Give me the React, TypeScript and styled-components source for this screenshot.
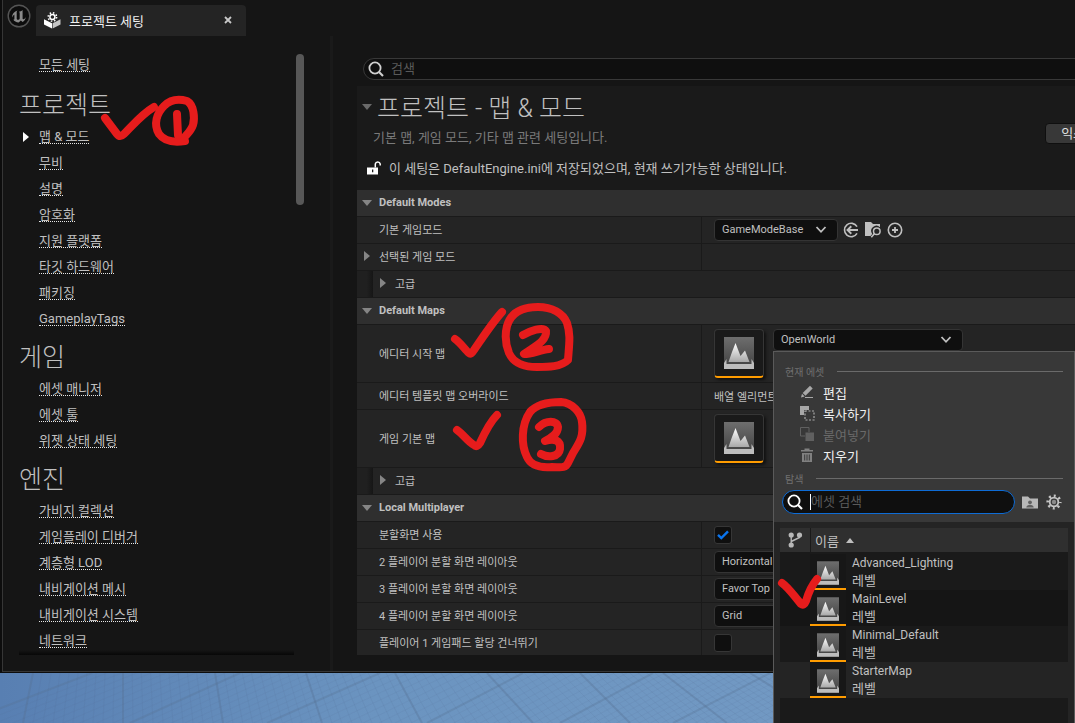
import React from 'react';
import styled, { createGlobalStyle, css } from 'styled-components';

const Global = createGlobalStyle`
  *, *::before, *::after { box-sizing: border-box; }
  html, body, #root { min-height: 100vh; }
  body {
    margin: 0;
    background: #151515;
    color: #c0c0c0;
    font-family: Roboto, "Noto Sans CJK KR", sans-serif;
    font-size: 13px;
    overflow: hidden;
  }
  h1, h2, ul, p { margin: 0; padding: 0; font-weight: 400; }
  ul { list-style: none; }
  button, input, select { font: inherit; color: inherit; margin: 0; }
  button { border: 0; background: none; padding: 0; cursor: pointer; }
  svg { display: block; flex: none; }
`;

/* ---------- Page and window ---------- */

const Page = styled.div`
  position: relative;
  min-height: 100vh;
  display: flex;
  flex-direction: column;
  overflow: hidden;
`;

const Window = styled.div`
  background: #151515;
  border-left: 2px solid #0d0d0d;
  border-bottom: 1px solid #0d0d0d;
`;

const WindowFrame = styled.div`
  border-left: 1px solid #363636;
  border-bottom: 1px solid #363636;
`;

const TitleBar = styled.header`
  display: flex;
  align-items: flex-end;
  gap: 5px;
  height: 36px;
  padding-left: 4px;
`;

const LogoBox = styled.div`
  align-self: flex-start;
  padding-top: 4px;
`;

const Tab = styled.div`
  display: flex;
  align-items: center;
  gap: 8px;
  width: 210px;
  height: 31px;
  padding: 0 14px 1px 8px;
  border-radius: 4px 4px 0 0;
  background: #242424;
  color: #f0f0f0;
`;

const TabTitle = styled.span`
  flex: 1;
`;

const Columns = styled.div`
  display: flex;
`;

/* ---------- Sidebar ---------- */

const Sidebar = styled.nav`
  display: flex;
  flex: none;
  width: 330px;
  padding: 16px 26px 16px 16px;
  border-right: 3px solid #1a1a1a;
`;

const SidebarList = styled.div`
  position: relative;
  flex: 1;
  height: 603px;
  overflow: hidden;
  &::after {
    content: '';
    position: absolute;
    left: 0;
    right: 0;
    bottom: 0;
    height: 5px;
    background: linear-gradient(to bottom, transparent, #070707);
  }
`;

const ScrollBar = styled.div`
  width: 8px;
  height: 151px;
  margin: 2px 0 0 2px;
  border-radius: 4px;
  background: #575757;
`;

const NavHeading = styled.h2`
  height: 44px;
  padding-top: 8px;
  line-height: 36px;
  font-size: 25px;
  font-weight: 300;
`;

const NavItem = styled.li`
  display: flex;
  align-items: flex-start;
  height: 26px;
  padding: 5px 0 0 4px;
`;

const NavArrow = styled.span`
  width: 16px;
  padding-top: 3px;
`;

const NavLink = styled.a`
  height: 15px;
  line-height: 16px;
  border-bottom: 1px dotted #e6e6e6;
  color: inherit;
  text-decoration: none;
`;

const AllSettings = styled.ul`
  margin-bottom: 2px;
`;

/* ---------- Main ---------- */

const Main = styled.main`
  flex: 1;
  min-width: 0;
  padding: 22px 0 16px 24px;
  overflow: hidden;
`;

const Wide = styled.div`
  margin-right: -60px;
`;

const SearchField = styled.label<{ $active?: boolean }>`
  display: flex;
  align-items: center;
  gap: 7px;
  flex: 1;
  height: ${p => (p.$active ? 24 : 22)}px;
  padding-left: 4px;
  border: 1px solid ${p => (p.$active ? '#0e6cd6' : '#383838')};
  border-radius: 12px;
  background: #0f0f0f;
  ${p => !p.$active && css`margin: 0 0 6px 6px;`}
`;

const SearchInput = styled.input`
  flex: 1;
  min-width: 0;
  height: 18px;
  padding: 0 0 1px;
  border: 0;
  outline: 0;
  background: transparent;
  &::placeholder { color: #5a5a5a; opacity: 1; }
`;

const Caret = styled.span`
  width: 1px;
  height: 16px;
  margin-right: -7px;
  background: #fff;
`;

const Intro = styled.section`
  padding: 6px 0;
  background: #1a1a1a;
`;

const TitleRow = styled.div`
  display: flex;
  align-items: center;
  height: 30px;
  padding-left: 5px;
  gap: 5px;
`;

const Title = styled.h1`
  padding-top: 3px;
  font-size: 25px;
  line-height: 30px;
  font-weight: 300;
`;

const DescRow = styled.div`
  display: flex;
  justify-content: space-between;
  height: 30px;
  padding: 1px 10px 0 16px;
  line-height: 30px;
  color: #7a7a7a;
`;

const ExportButton = styled.button`
  height: 21px;
  padding: 0 15px;
  line-height: 19px;
  border: 1px solid #0f0f0f;
  border-radius: 4px;
  background: #383838;
  color: #e0e0e0;
`;

const LockRow = styled.div`
  display: flex;
  align-items: center;
  gap: 8px;
  height: 32px;
  padding: 0 0 2px 10px;
`;

const GroupHeader = styled.h2`
  border-bottom: 1px solid #1a1a1a;
  background: #2f2f2f;
`;

const GroupToggle = styled.button`
  display: flex;
  align-items: center;
  width: 100%;
  height: 26px;
  gap: 7px;
  padding: 0 0 1px 5px;
  font-size: 11px;
  font-weight: 700;
`;

const Row = styled.div<{ $tall?: boolean }>`
  display: grid;
  grid-template-columns: 344px 1fr;
  height: ${p => (p.$tall ? 58 : 27)}px;
  border-bottom: 1px solid #1a1a1a;
  background: #242424;
  font-size: 11px;
  &:last-child { height: 25px; border-bottom: 0; }
`;

const NameCell = styled.div`
  display: flex;
  align-items: center;
  padding: 0 0 2px 7px;
`;

const ExpandSlot = styled.span`
  width: 15px;
`;

const ValueCell = styled.div`
  display: flex;
  align-items: center;
  gap: 4px;
  padding-left: 12px;
  border-left: 1px solid #1a1a1a;
  white-space: nowrap;
`;

const AssetCell = styled(ValueCell)`
  align-items: flex-start;
  padding-top: 4px;
  gap: 9px;
`;

const AdvancedRow = styled.div`
  display: flex;
  align-items: stretch;
  height: 27px;
  border-bottom: 1px solid #1a1a1a;
  background: #242424;
  font-size: 11px;
`;

const IndentStrip = styled.span`
  width: 16px;
  background: linear-gradient(to right, #202020 60%, #161616);
`;

const AdvancedToggle = styled.button`
  display: flex;
  align-items: center;
  gap: 9px;
  padding: 0 0 2px 7px;
`;

const SelectBox = styled.span<{ $w: number }>`
  display: grid;
  align-items: center;
  width: ${p => p.$w}px;
  height: 22px;
  & > * { grid-area: 1 / 1; }
  & > svg { justify-self: end; margin-right: 11px; pointer-events: none; }
`;

const Select = styled.select`
  appearance: none;
  width: 100%;
  height: 22px;
  padding: 0 0 1px 7px;
  border: 1px solid #343434;
  border-radius: 4px;
  background: #0f0f0f;
  font-size: 11px;
`;

const IconButton = styled.button`
  display: grid;
  place-items: center;
  width: 18px;
  height: 18px;
  color: #c0c0c0;
`;

const CheckWrap = styled.span`
  display: grid;
  place-items: center;
  width: 18px;
  height: 18px;
  & > * { grid-area: 1 / 1; }
  & > svg { pointer-events: none; }
`;

const CheckInput = styled.input`
  appearance: none;
  width: 18px;
  height: 18px;
  border: 1px solid #363636;
  border-radius: 3px;
  background: #0f0f0f;
`;

const Thumb = styled.span`
  display: grid;
  place-items: center;
  width: 50px;
  height: 49px;
  border: 1px solid #363636;
  border-bottom: 2px solid #ff9c00;
  border-radius: 4px;
  background: #1a1a1a;
  box-shadow: 2px 2px 3px #111;
`;

/* ---------- Asset picker popup ---------- */

const Popup = styled.aside`
  position: absolute;
  left: 773px;
  top: 351px;
  bottom: 0;
  width: 302px;
  display: flex;
  flex-direction: column;
  border: 1px solid #5a5a5a;
  border-bottom: 0;
  background: #242424;
`;

const PopupTop = styled.div`
  padding: 8px;
  background: #383838;
`;

const MenuHeading = styled.h2`
  display: flex;
  align-items: center;
  gap: 13px;
  height: 22px;
  padding: 0 3px 0 3px;
  font-size: 10px;
  color: #707070;
  &::after { content: ''; flex: 1; height: 1px; background: #6a6a6a; }
`;

const MenuList = styled.ul`
  padding-bottom: 1px;
`;

const MenuItem = styled.button`
  display: flex;
  align-items: center;
  width: 100%;
  height: 21px;
  padding: 0 0 1px 18px;
  color: #f0f0f0;
  &:disabled { color: #6a6a6a; }
`;

const MenuIcon = styled.span`
  width: 23px;
`;

const PickerBar = styled.div`
  display: flex;
  align-items: center;
  gap: 6px;
  padding: 1px 3px 0 0;
`;

const AssetPanel = styled.div`
  flex: 1;
  margin: 6px 6px 0;
  background: #1a1a1a;
`;

const AssetTable = styled.table`
  width: 100%;
  border-spacing: 0;
  th, td { padding: 0; text-align: left; font-weight: 400; }
  th { height: 26px; background: #2f2f2f; border-bottom: 2px solid #1a1a1a; }
  th:first-child { width: 31px; border-right: 1px solid #1a1a1a; }
`;

const Centered = styled.span`
  display: grid;
  place-items: center;
`;

const SortLabel = styled.button`
  display: flex;
  align-items: center;
  gap: 7px;
  padding-left: 4px;
`;

const AssetRow = styled.tr<{ $bg: string }>`
  height: 36px;
  background: ${p => p.$bg};
`;

const AssetName = styled.div`
  display: flex;
  gap: 6px;
  margin-left: -1px;
`;

const AssetText = styled.div`
  line-height: 17px;
  padding-top: 1px;
`;

const AssetTitle = styled.div`
  font-size: 12px;
`;

const SmallThumb = styled.span`
  display: grid;
  place-items: center;
  width: 36px;
  height: 36px;
  padding-top: 4px;
  border-bottom: 2px solid #ff9c00;
  background: #171717;
`;

/* ---------- Level viewport behind the window ---------- */

const Viewport = styled.div`
  flex: 1;
  min-height: 50px;
  overflow: hidden;
  background: linear-gradient(to right, #587fb2, #6b94c0 35%, #7299c3 75%);
`;

/* ---------- Hand-drawn marks ---------- */

const MarkSvg = styled.svg<{ $x: number; $y: number }>`
  position: absolute;
  left: ${p => p.$x}px;
  top: ${p => p.$y}px;
  pointer-events: none;
  fill: none;
  stroke: #e61c1c;
  stroke-width: 8;
  stroke-linecap: round;
  stroke-linejoin: round;
`;

/* ---------- Icons ---------- */

const Down = ({ c = '#7a7a7a' }: { c?: string }) => (
  <svg width="10" height="6"><path d="M0 0H10L5 6Z" fill={c} /></svg>
);
const Right = ({ c = '#858585' }: { c?: string }) => (
  <svg width="6" height="10"><path d="M0 0L6 5L0 10Z" fill={c} /></svg>
);
const Chevron = () => (
  <svg width="12" height="8" fill="none" stroke="#c0c0c0" strokeWidth="1.8"><path d="M1.5 1L6 5.8L10.500 1" /></svg>
);
const Search = ({ c = '#d0d0d0' }: { c?: string }) => (
  <svg width="16" height="16" fill="none" stroke={c} strokeWidth="1.8">
    <circle cx="7" cy="7" r="5.600" /><path d="M11 11L15 15" strokeWidth="2.200" />
  </svg>
);
const Logo = () => (
  <svg width="24" height="24" viewBox="0 0 24 24">
    <circle cx="12" cy="12" r="10.800" fill="#0c0c0c" stroke="#555" strokeWidth="1.400" />
    <path
      d="M5 13.500C5 10 7.400 7.300 10.600 6.400C9.800 7.100 9.700 7.700 9.700 8.500V14.600C9.700 15.700 10.600 16.100 11.600 15.700C12.300 15.400 12.700 15 12.700 14.500V9C12.700 8.300 12.300 8 11.700 7.900C13 7.400 14.500 6.900 15.700 5.900C15.500 6.800 15.600 7.600 15.600 8.400V14.500C15.600 15.300 16.300 15.600 17.100 15.100C17.900 14.600 18.600 13.800 19 13C18.500 15.300 17.400 16.900 15.700 17.900L13.800 16.400L11.700 18.500C9.300 18.400 7.200 17.300 6.200 15.600C7 15.900 7.400 15.600 7.400 14.700V10.400C6.200 11.200 5.500 12.200 5 13.500Z"
      fill="#8a8a8a"
    />
  </svg>
);
const SettingsBox = () => (
  <svg width="17" height="17" viewBox="0 0 17 17">
    <path d="M0 7.200L8 11.200V16.600L0 12.600Z" fill="#fff" />
    <path d="M16.500 7.200L8.600 11.200V16.600L16.500 12.600Z" fill="#c4c4c4" />
    <circle cx="8.400" cy="5" r="2.500" fill="none" stroke="#fff" strokeWidth="1.500" />
    <circle cx="8.400" cy="5" r="4.200" fill="none" stroke="#fff" strokeWidth="1.600" strokeDasharray="1.500 1.800" />
  </svg>
);
const Close = () => (
  <svg width="8" height="8" stroke="#c8c8c8" strokeWidth="1.800"><path d="M1 1L7 7M7 1L1 7" /></svg>
);
const Unlock = () => (
  <svg width="14" height="15" viewBox="0 0 14 15">
    <path d="M0 7.500H11V14.500H0Z" fill="#fff" />
    <path d="M8.300 7.500V4A2.500 2.500 0 0 1 13.200 4V5.500" fill="none" stroke="#fff" strokeWidth="1.500" />
    <path d="M5 9.600H6.300V12.200H5Z" fill="#1a1a1a" />
  </svg>
);
const UseSelected = () => (
  <svg width="16" height="16" fill="none" stroke="currentColor" strokeWidth="1.600">
    <path d="M14 4.600A6.700 6.700 0 1 0 14 11.400" /><path d="M15 8H4.500M8.300 4.300L4.500 8L8.300 11.700" strokeWidth="1.900" />
  </svg>
);
const Browse = () => (
  <svg width="17" height="16">
    <path d="M0 0H6L8 2H15V5.200A5.200 5.200 0 0 0 7.200 12L5.500 14H0Z" fill="currentColor" />
    <circle cx="11.800" cy="9.300" r="3.300" fill="none" stroke="currentColor" strokeWidth="1.500" />
    <path d="M9.300 11.800L6.300 15.300" stroke="currentColor" strokeWidth="1.600" />
  </svg>
);
const Plus = () => (
  <svg width="16" height="16" fill="none" stroke="currentColor" strokeWidth="1.600">
    <circle cx="8" cy="8" r="6.700" /><path d="M8 5V11M5 8H11" strokeWidth="1.800" />
  </svg>
);
const Check = () => (
  <svg width="12" height="10" fill="none" stroke="#0a74ee" strokeWidth="2.400"><path d="M1 4.800L4.300 8L11 1.300" /></svg>
);
const LevelArt = ({ w, h }: { w: number; h: number }) => (
  <svg width={w} height={h} viewBox="0 0 30 32">
    <defs>
      <linearGradient id="lvSky" x1="0" y1="0" x2="0" y2="1">
        <stop offset="0" stopColor="#6e6e6e" /><stop offset="1" stopColor="#3f3f3f" />
      </linearGradient>
      <linearGradient id="lvPeak" x1="0" y1="0" x2="0" y2="1">
        <stop offset="0" stopColor="#fff" /><stop offset="1" stopColor="#a8a8a8" />
      </linearGradient>
    </defs>
    <path d="M0 0H30V32H0Z" fill="url(#lvSky)" />
    <path d="M4.500 25L8 15L11.500 6L16.500 19L21 13.500L25.500 25Z" fill="url(#lvPeak)" />
    <path d="M0 32V26L2.500 22V27H27.500V22L30 26V32Z" fill="#bdbdbd" />
  </svg>
);
const Pencil = () => (
  <svg width="14" height="14" fill="#a8a8a8">
    <path d="M1 12.500L2 8.800L4.700 11.400Z" /><path d="M2.700 8L10 0.700L12.700 3.400L5.500 10.700Z" /><path d="M5 12H13V13H5Z" />
  </svg>
);
const Copy = () => (
  <svg width="15" height="15">
    <path d="M0 0H9V4H4V9H0Z" fill="#a8a8a8" />
    <path d="M5 5H14V14H5Z" fill="none" stroke="#a8a8a8" strokeWidth="1.200" strokeDasharray="2 1.500" />
  </svg>
);
const Paste = () => (
  <svg width="15" height="15">
    <path d="M5 9H0.500V0.500H9V5" fill="none" stroke="#606060" /><path d="M5.500 5.500H14V14H5.500Z" fill="#606060" />
  </svg>
);
const Trash = () => (
  <svg width="14" height="15" fill="#808080">
    <path d="M1 2H13V3.500H1Z" /><path d="M4.500 0.500H9.500V2H4.500Z" />
    <path d="M2 5H12V14H2Z" />
    <path d="M4.700 6.500V12.500M7 6.500V12.500M9.300 6.500V12.500" stroke="#383838" strokeWidth="1" />
  </svg>
);
const PersonFolder = () => (
  <svg width="16" height="13">
    <path d="M0 0.500H6L8 2.500H16V12.500H0Z" fill="#b8b8b8" />
    <circle cx="8" cy="6.300" r="1.900" fill="#606060" /><path d="M4.300 11.500C4.500 7.800 11.500 7.800 11.700 11.500Z" fill="#606060" />
  </svg>
);
const Gear = () => (
  <svg width="16" height="16" fill="none" stroke="#c4c4c4">
    <circle cx="8" cy="8" r="4.300" strokeWidth="1.800" /><circle cx="8" cy="8" r="2.200" fill="#8a8a8a" stroke="none" />
    <circle cx="8" cy="8" r="6.300" strokeWidth="2.600" strokeDasharray="2 2.948" strokeDashoffset="1" />
  </svg>
);
const Branch = () => (
  <svg width="15" height="16" fill="#b8b8b8">
    <circle cx="3.200" cy="3" r="2.600" /><circle cx="11.500" cy="3" r="2.600" /><circle cx="3.200" cy="13" r="2.600" />
    <path d="M3.200 3V13M11.500 3V5.500L3.200 9.500" fill="none" stroke="#b8b8b8" strokeWidth="1.400" />
  </svg>
);

/* ---------- Data ---------- */

const navGroups = [
  { title: '프로젝트', items: ['맵 & 모드', '무비', '설명', '암호화', '지원 플랫폼', '타깃 하드웨어', '패키징', 'GameplayTags'] },
  { title: '게임', items: ['에셋 매니저', '에셋 툴', '위젯 상태 세팅'] },
  { title: '엔진', items: ['가비지 컬렉션', '게임플레이 디버거', '계층형 LOD', '내비게이션 메시', '내비게이션 시스템', '네트워크'] },
];

const assets = [
  { name: 'Advanced_Lighting', bg: '#1a1a1a' },
  { name: 'MainLevel', bg: '#151515' },
  { name: 'Minimal_Default', bg: '#1a1a1a' },
  { name: 'StarterMap', bg: '#242424' },
];

/* ---------- Parts ---------- */

const Group = ({ title }: { title: string }) => (
  <GroupHeader><GroupToggle><Down c="#858585" />{title}</GroupToggle></GroupHeader>
);

const Advanced = () => (
  <AdvancedRow><IndentStrip /><AdvancedToggle><Right />고급</AdvancedToggle></AdvancedRow>
);

const Picker = ({ id, value, w }: { id: string; value: string; w: number }) => (
  <SelectBox $w={w}>
    <Select id={id} defaultValue={value}><option>{value}</option></Select>
    <Chevron />
  </SelectBox>
);

const Name = ({ id, text, expand }: { id?: string; text: string; expand?: boolean }) => (
  <NameCell>
    <ExpandSlot>{expand && <Right />}</ExpandSlot>
    {id ? <label htmlFor={id}>{text}</label> : <span>{text}</span>}
  </NameCell>
);

const Toggle = ({ id, on }: { id: string; on?: boolean }) => (
  <CheckWrap><CheckInput id={id} type="checkbox" defaultChecked={on} />{on && <Check />}</CheckWrap>
);

const majorLines = [
  [33, 23], [123, 123], [215, 223], [306, 322], [395, 422], [487, 533], [580, 630], [663, 727], [750, 830],
];
const risingLines = [[-38, 92], [130, 240], [267, 380], [427, 523], [560, 653], [673, 770]];

const Grid = () => (
  <svg width="100%" height="50" stroke="#566f92">
    {majorLines.map(([a, b], i) => {
      const [na, nb] = majorLines[i + 1] ?? [a + 88, b + 105];
      return (
        <g key={a}>
          <path d={`M${a} 0L${b} 50`} strokeWidth="2" strokeOpacity="0.350" />
          {[1, 2, 3, 4, 5, 6, 7, 8, 9].map(k => (
            <path key={k} d={`M${a + ((na - a) * k) / 10} 0L${b + ((nb - b) * k) / 10} 50`} strokeOpacity="0.130" />
          ))}
        </g>
      );
    })}
    {risingLines.map(([a, b], i) => {
      const [na, nb] = risingLines[i + 1] ?? [a + 110, b + 110];
      return (
        <g key={a}>
          <path d={`M${a} 50L${b} 0`} strokeWidth="2" strokeOpacity="0.300" />
          {[1, 2, 3, 4, 5, 6, 7, 8, 9].map(k => (
            <path key={k} d={`M${a + ((na - a) * k) / 10} 50L${b + ((nb - b) * k) / 10} 0`} strokeOpacity="0.100" />
          ))}
        </g>
      );
    })}
  </svg>
);

const Marks = () => (
  <>
    <MarkSvg $x={95} $y={90} width="110" height="62" viewBox="95 90 110 62" aria-hidden="true">
      <path d="M105 118L117 134Q120 138 124 134C134 124 142 114 154 107" />
      <path d="M185 141C172 143 164 141 159 134C153 124 157 113 164 106C171 99 180 99 187 101C194 105 195 118 193 125C191 131 187 134 184 138" />
      <path d="M177 114L178 135" />
    </MarkSvg>
    <MarkSvg $x={445} $y={298} width="135" height="80" viewBox="445 298 135 80" aria-hidden="true">
      <path d="M455 339C461 343 465 350 469 353Q471 355 474 350C483 337 492 323 502 312" />
      <path d="M507 326C511 312 522 307 538 307C552 307 563 313 567 323C571 335 569 345 568 360C561 367 548 367 537 367C523 367 513 362 509 353C505 343 505 334 507 326Z" />
      <path d="M523 335C530 331 543 326 546 331C547 341 535 346 524 354C532 354 540 350 549 349" />
    </MarkSvg>
    <MarkSvg $x={445} $y={393} width="146" height="84" viewBox="445 393 146 84" aria-hidden="true">
      <path d="M457 430C464 435 468 442 474 445Q477 448 480 443C485 432 490 422 497 415" />
      <path d="M568 463C565 469 560 467 552 467C541 468 531 466 527 457C521 445 521 425 530 412C537 404 550 402 561 402C573 403 581 413 582 422C584 437 579 443 573 453Z" />
      <path d="M539 427C546 420 557 420 558 427C558 434 551 438 545 441C554 438 561 440 560 449C559 457 548 458 541 454" />
    </MarkSvg>
    <MarkSvg $x={775} $y={570} width="50" height="44" viewBox="775 570 50 44" aria-hidden="true">
      <path d="M782 583C789 588 794 596 801 604Q804 606 806 601C808 594 812 585 817 579" />
    </MarkSvg>
  </>
);

export default function App() {
  return (
    <>
      <Global />
      <Page>
        <Window>
          <WindowFrame>
            <TitleBar>
              <LogoBox><Logo /></LogoBox>
              <Tab>
                <SettingsBox />
                <TabTitle>프로젝트 세팅</TabTitle>
                <button aria-label="닫기"><Close /></button>
              </Tab>
            </TitleBar>
            <Columns>
              <Sidebar>
                <SidebarList>
                  <AllSettings>
                    <NavItem><NavArrow /><NavLink href="#all">모든 세팅</NavLink></NavItem>
                  </AllSettings>
                  {navGroups.map(g => (
                    <section key={g.title}>
                      <NavHeading>{g.title}</NavHeading>
                      <ul>
                        {g.items.map(t => (
                          <NavItem key={t}>
                            <NavArrow>{t === '맵 & 모드' && <Right c="#fff" />}</NavArrow>
                            <NavLink href="#section">{t}</NavLink>
                          </NavItem>
                        ))}
                      </ul>
                    </section>
                  ))}
                </SidebarList>
                <ScrollBar />
              </Sidebar>
              <Main>
                <Wide>
                  <SearchField>
                    <Search />
                    <SearchInput type="text" placeholder="검색" aria-label="검색" />
                  </SearchField>
                  <Intro>
                    <TitleRow><Down c="#6a6a6a" /><Title>프로젝트 - 맵 &amp; 모드</Title></TitleRow>
                    <DescRow>
                      <p>기본 맵, 게임 모드, 기타 맵 관련 세팅입니다.</p>
                      <ExportButton>익스포트</ExportButton>
                    </DescRow>
                    <LockRow>
                      <Unlock />
                      <p>이 세팅은 DefaultEngine.ini에 저장되었으며, 현재 쓰기가능한 상태입니다.</p>
                    </LockRow>
                  </Intro>
                  <div>
                    <Group title="Default Modes" />
                    <Row>
                      <Name id="mode" text="기본 게임모드" />
                      <ValueCell>
                        <Picker id="mode" value="GameModeBase" w={124} />
                        <IconButton aria-label="선택한 에셋 사용"><UseSelected /></IconButton>
                        <IconButton aria-label="찾아보기"><Browse /></IconButton>
                        <IconButton aria-label="추가"><Plus /></IconButton>
                      </ValueCell>
                    </Row>
                    <Row><Name text="선택된 게임 모드" expand /><ValueCell /></Row>
                    <Advanced />
                    <Group title="Default Maps" />
                    <Row $tall>
                      <Name id="editorMap" text="에디터 시작 맵" />
                      <AssetCell>
                        <Thumb><LevelArt w={30} h={32} /></Thumb>
                        <Picker id="editorMap" value="OpenWorld" w={190} />
                      </AssetCell>
                    </Row>
                    <Row>
                      <Name text="에디터 템플릿 맵 오버라이드" />
                      <ValueCell>배열 엘리먼트</ValueCell>
                    </Row>
                    <Row $tall>
                      <Name text="게임 기본 맵" />
                      <AssetCell><Thumb><LevelArt w={30} h={32} /></Thumb></AssetCell>
                    </Row>
                    <Advanced />
                    <Group title="Local Multiplayer" />
                    <Row><Name id="split" text="분할화면 사용" /><ValueCell><Toggle id="split" on /></ValueCell></Row>
                    <Row><Name id="two" text="2 플레이어 분할 화면 레이아웃" /><ValueCell><Picker id="two" value="Horizontal" w={124} /></ValueCell></Row>
                    <Row><Name id="three" text="3 플레이어 분할 화면 레이아웃" /><ValueCell><Picker id="three" value="Favor Top" w={124} /></ValueCell></Row>
                    <Row><Name id="four" text="4 플레이어 분할 화면 레이아웃" /><ValueCell><Picker id="four" value="Grid" w={124} /></ValueCell></Row>
                    <Row><Name id="pad" text="플레이어 1 게임패드 할당 건너뛰기" /><ValueCell><Toggle id="pad" /></ValueCell></Row>
                  </div>
                </Wide>
              </Main>
            </Columns>
          </WindowFrame>
        </Window>
        <Viewport><Grid /></Viewport>
        <Popup>
          <PopupTop>
            <MenuHeading>현재 에셋</MenuHeading>
            <MenuList>
              <li><MenuItem><MenuIcon><Pencil /></MenuIcon>편집</MenuItem></li>
              <li><MenuItem><MenuIcon><Copy /></MenuIcon>복사하기</MenuItem></li>
              <li><MenuItem disabled><MenuIcon><Paste /></MenuIcon>붙여넣기</MenuItem></li>
              <li><MenuItem><MenuIcon><Trash /></MenuIcon>지우기</MenuItem></li>
            </MenuList>
            <MenuHeading>탐색</MenuHeading>
            <PickerBar>
              <SearchField $active>
                <Search c="#fff" />
                <Caret />
                <SearchInput type="text" placeholder="에셋 검색" aria-label="에셋 검색" />
              </SearchField>
              <IconButton aria-label="폴더"><PersonFolder /></IconButton>
              <IconButton aria-label="설정"><Gear /></IconButton>
            </PickerBar>
          </PopupTop>
          <AssetPanel>
            <AssetTable>
              <thead>
                <tr>
                  <th aria-label="리비전 컨트롤"><Centered><Branch /></Centered></th>
                  <th>
                    <SortLabel>
                      이름
                      <svg width="8" height="5"><path d="M0 5L4 0L8 5Z" fill="#c0c0c0" /></svg>
                    </SortLabel>
                  </th>
                </tr>
              </thead>
              <tbody>
                {assets.map(a => (
                  <AssetRow key={a.name} $bg={a.bg}>
                    <td />
                    <td>
                      <AssetName>
                        <SmallThumb><LevelArt w={22} h={24} /></SmallThumb>
                        <AssetText><AssetTitle>{a.name}</AssetTitle>레벨</AssetText>
                      </AssetName>
                    </td>
                  </AssetRow>
                ))}
              </tbody>
            </AssetTable>
          </AssetPanel>
        </Popup>
        <Marks />
      </Page>
    </>
  );
}
